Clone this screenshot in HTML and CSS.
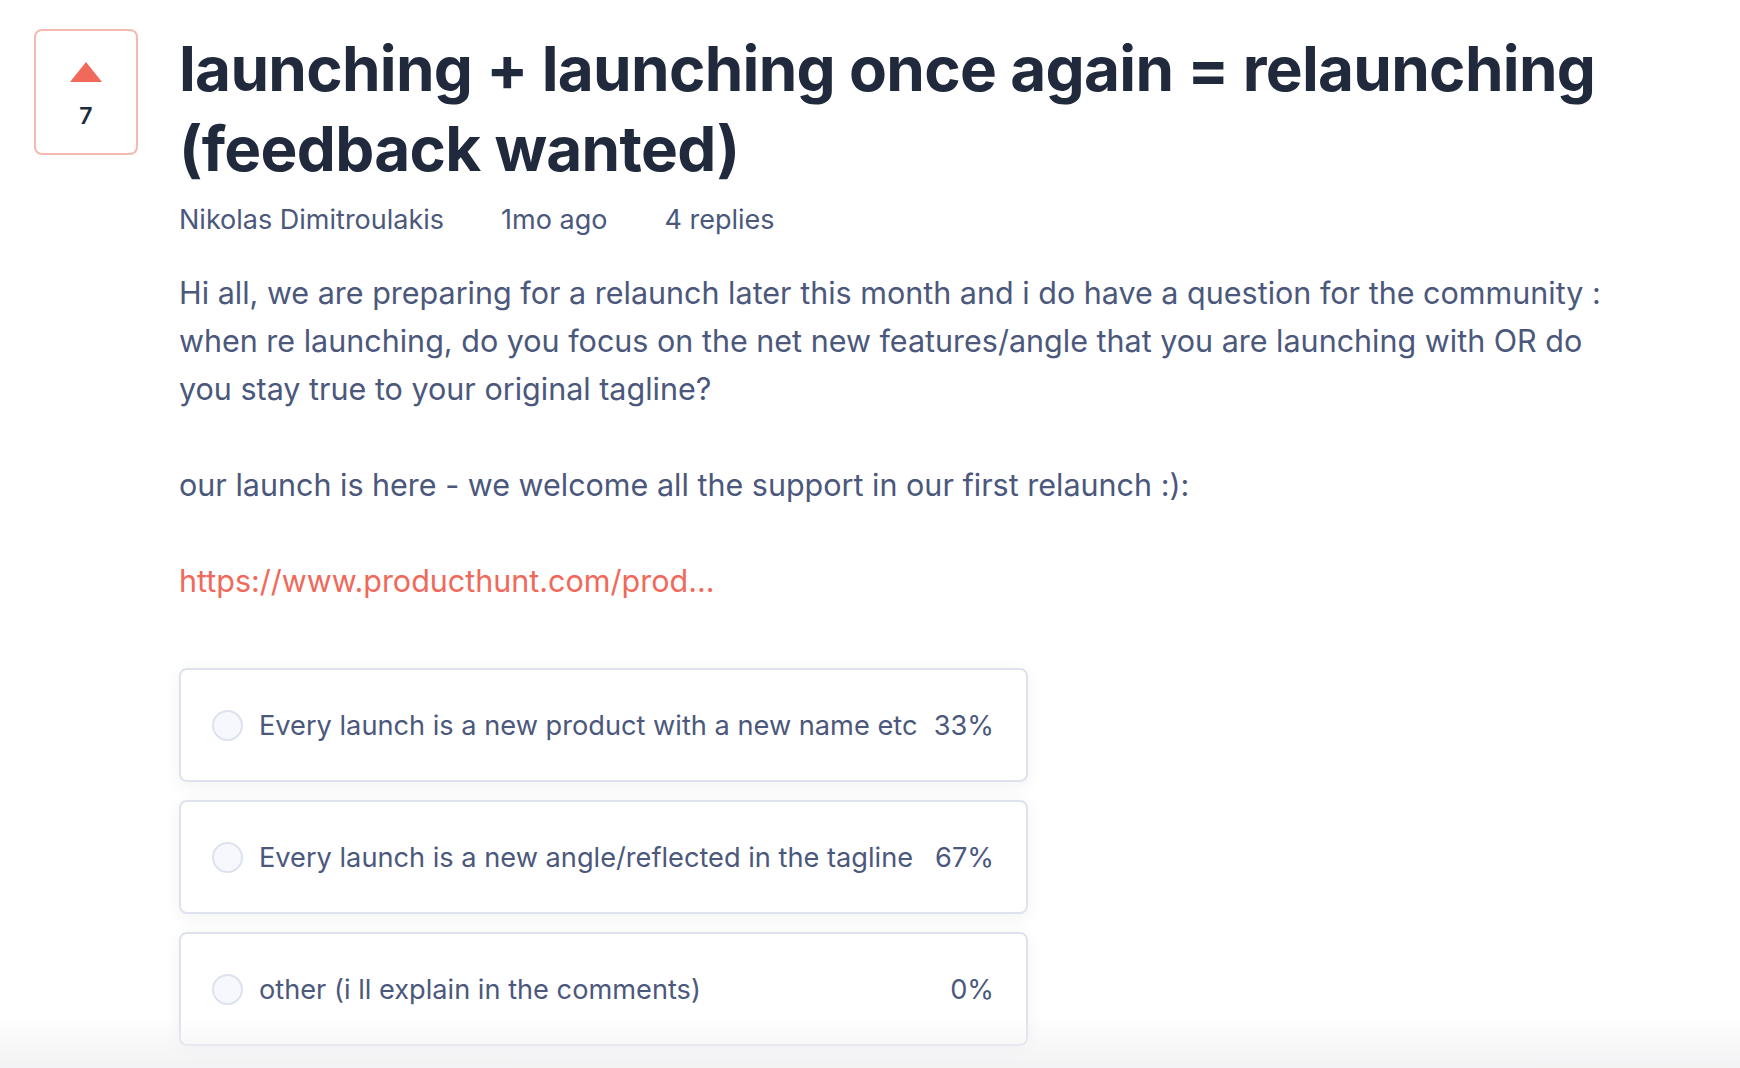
FILE: index.html
```html
<!DOCTYPE html>
<html lang="en">
<head>
<meta charset="utf-8">
<title>launching + launching once again = relaunching</title>
<link rel="stylesheet" href="styles.css">
</head>
<body>
<div class="page">
  <div class="vote">
    <svg class="vote-arrow" width="32" height="20" viewBox="0 0 32 20"><path d="M16 0 L32 20 L0 20 Z" fill="#f0695a"/></svg>
    <span class="vote-count">7</span>
  </div>
  <div class="post">
    <h1 class="title">launching + launching once again = relaunching (feedback wanted)</h1>
    <div class="meta">
      <span>Nikolas Dimitroulakis</span>
      <span>1mo ago</span>
      <span>4 replies</span>
    </div>
    <div class="body">
      <p>Hi all, we are preparing for a relaunch later this month and i do have a question for the community : when re launching, do you focus on the net new features/angle that you are launching with OR do you stay true to your original tagline?</p>
      <p>our launch is here - we welcome all the support in our first relaunch :):</p>
      <p><a class="link" href="#">https://www.producthunt.com/prod...</a></p>
    </div>
    <div class="poll">
      <div class="option"><span class="radio"></span><span class="label">Every launch is a new product with a new name etc</span><span class="pct">33%</span></div>
      <div class="option"><span class="radio"></span><span class="label">Every launch is a new angle/reflected in the tagline</span><span class="pct">67%</span></div>
      <div class="option"><span class="radio"></span><span class="label">other (i ll explain in the comments)</span><span class="pct">0%</span></div>
    </div>
  </div>
</div>
<div class="bottom-fade"></div>
</body>
</html>
```
FILE: styles.css
```css
html, body {
  margin: 0;
  padding: 0;
  background: #ffffff;
}
body {
  font-family: Inter, "Noto Sans", "Liberation Sans", sans-serif;
  height: 1068px;
  overflow: hidden;
}
.page {
  display: flex;
  align-items: flex-start;
  gap: 41px;
  padding: 29px 0 0 34px;
}
.vote {
  flex: none;
  width: 104px;
  height: 126px;
  box-sizing: border-box;
  border: 2px solid #f6b9b0;
  border-radius: 8px;
  display: flex;
  flex-direction: column;
  align-items: center;
  padding-top: 31px;
}
.vote-arrow {
  display: block;
}
.vote-count {
  margin-top: 23px;
  font-size: 23px;
  font-weight: 600;
  color: #21293c;
  line-height: 1;
}
.post {
  flex: none;
  width: 1520px;
}
.title {
  margin: 0;
  font-size: 62px;
  line-height: 80px;
  font-weight: 700;
  color: #21293c;
  letter-spacing: -0.7px;
  width: 1480px;
}
.meta {
  display: flex;
  gap: 57px;
  margin-top: 15px;
  font-size: 27px;
  line-height: 32px;
  color: #4b587c;
}
.body {
  margin-top: 33px;
  font-size: 30.5px;
  line-height: 48px;
  color: #4b587c;
  width: 1445px;
}
.body p {
  margin: 0 0 48px 0;
}
.body p:last-child {
  margin-bottom: 0;
}
.link {
  color: #f0695a;
  text-decoration: none;
}
.poll {
  margin-top: 63px;
  width: 849px;
  display: flex;
  flex-direction: column;
  gap: 18px;
}
.option {
  height: 114px;
  box-sizing: border-box;
  border: 2px solid #dde2ed;
  border-radius: 8px;
  background: #ffffff;
  box-shadow: 0 4px 18px rgba(30, 40, 60, 0.06);
  display: flex;
  align-items: center;
  padding: 0 32px 0 31px;
  font-size: 27.2px;
  color: #4b587c;
}
.radio {
  flex: none;
  width: 31px;
  height: 31px;
  box-sizing: border-box;
  border: 2px solid #dde3ee;
  border-radius: 50%;
  background: #f6f8fd;
  margin-right: 16px;
}
.label {
  flex: 1;
}
.pct {
  flex: none;
}
.bottom-fade {
  position: fixed;
  left: 0;
  right: 0;
  bottom: 0;
  height: 50px;
  background: linear-gradient(to bottom, rgba(240, 240, 242, 0), rgba(240, 240, 242, 0.9));
  pointer-events: none;
}
```
